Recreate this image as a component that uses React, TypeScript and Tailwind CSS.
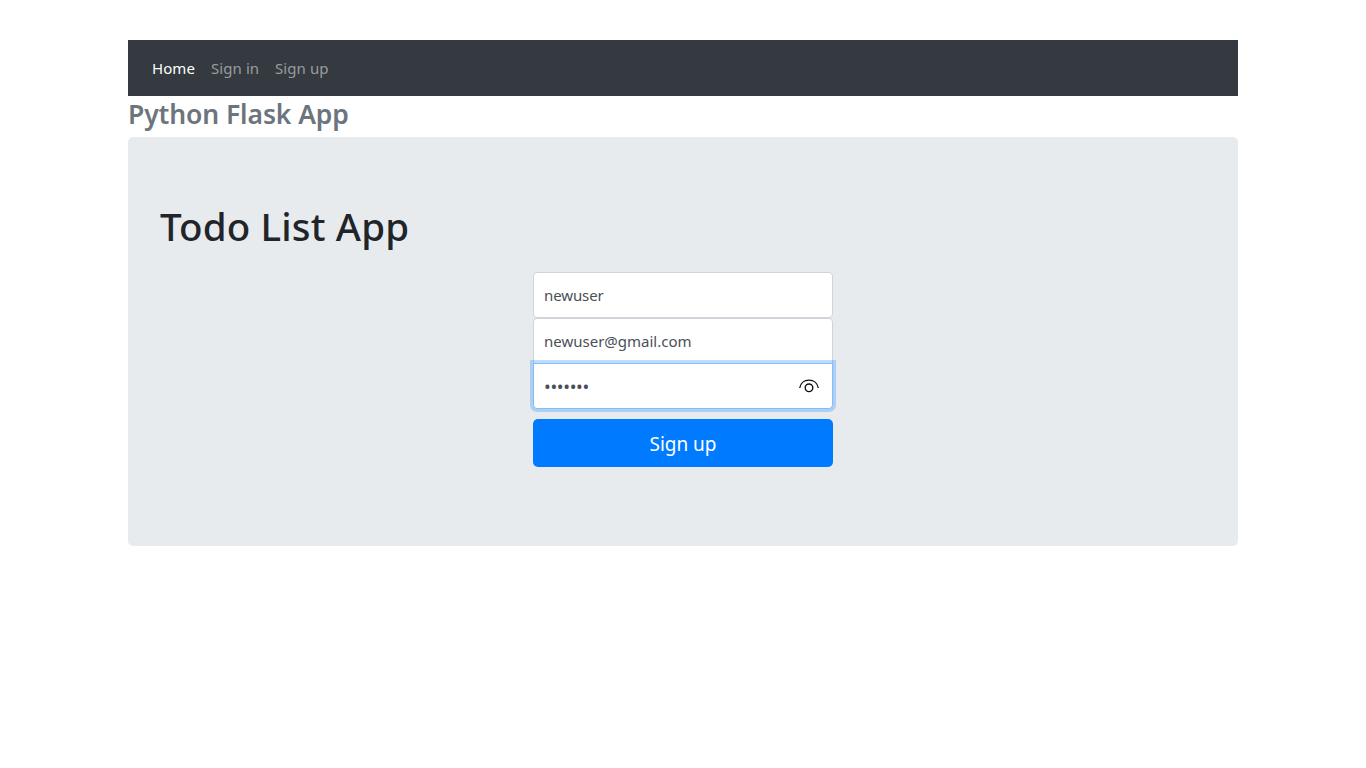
export default function App() {
  return (
    <div className="mx-auto w-[1110px] pt-10 font-['Noto_Sans','Open_Sans',sans-serif] text-[#212529]">
      <nav className="flex h-14 items-center bg-[#343a40] px-6 text-[15px] leading-6 tracking-[0.08px] whitespace-nowrap">
        <a className="w-[59px] text-white">Home</a>
        <a className="w-16 text-[#999c9f]">Sign in</a>
        <a className="text-[#999c9f]">Sign up</a>
      </nav>
      <h3 className="mb-2 h-[33px] text-[26.5px] leading-[36px] font-semibold tracking-[-0.1px] whitespace-nowrap text-[#6c757d]">
        Python Flask App
      </h3>
      <main className="h-[409px] rounded-[5px] bg-[#e8ebee] px-8 pt-16">
        <h1 className="h-[71px] text-[38.5px] leading-[51px] font-medium tracking-[0.15px] whitespace-nowrap">
          Todo List App
        </h1>
        <form className="mx-auto flex w-[300px] flex-col text-[15px] text-[#495057]">
          <div className="flex h-[46px] items-center rounded border border-[#ced4da] bg-white px-2.5">
            <span className="tracking-[-0.1px]">newuser</span>
          </div>
          <div className="flex h-[46px] items-center rounded-t border border-[#ced4da] bg-white px-2.5">
            <span>newuser@gmail.com</span>
          </div>
          <div className="relative -mt-px flex h-[46px] items-center justify-between rounded-b border border-[#80bdff] bg-white pr-[13px] pl-2.5 shadow-[0_0_0_3px_rgba(0,123,255,0.25)]">
            <span className="text-[18px] leading-6 tracking-[-0.35px]">•••••••</span>
            <svg width="20" height="14" viewBox="0 0 20 14" fill="none" stroke="#111" strokeWidth="1.4">
              <path d="M.7 9C1.5 4 5.3 1.1 10 1.1S18.5 4 19.3 9" />
              <circle cx="10" cy="8.8" r="3.8" />
            </svg>
          </div>
          <button
            type="button"
            className="mt-2.5 h-12 rounded-[5px] bg-[#007bff] pt-0.5 text-[19px] tracking-[-0.05px] text-white"
          >
            Sign up
          </button>
        </form>
      </main>
    </div>
  );
}
